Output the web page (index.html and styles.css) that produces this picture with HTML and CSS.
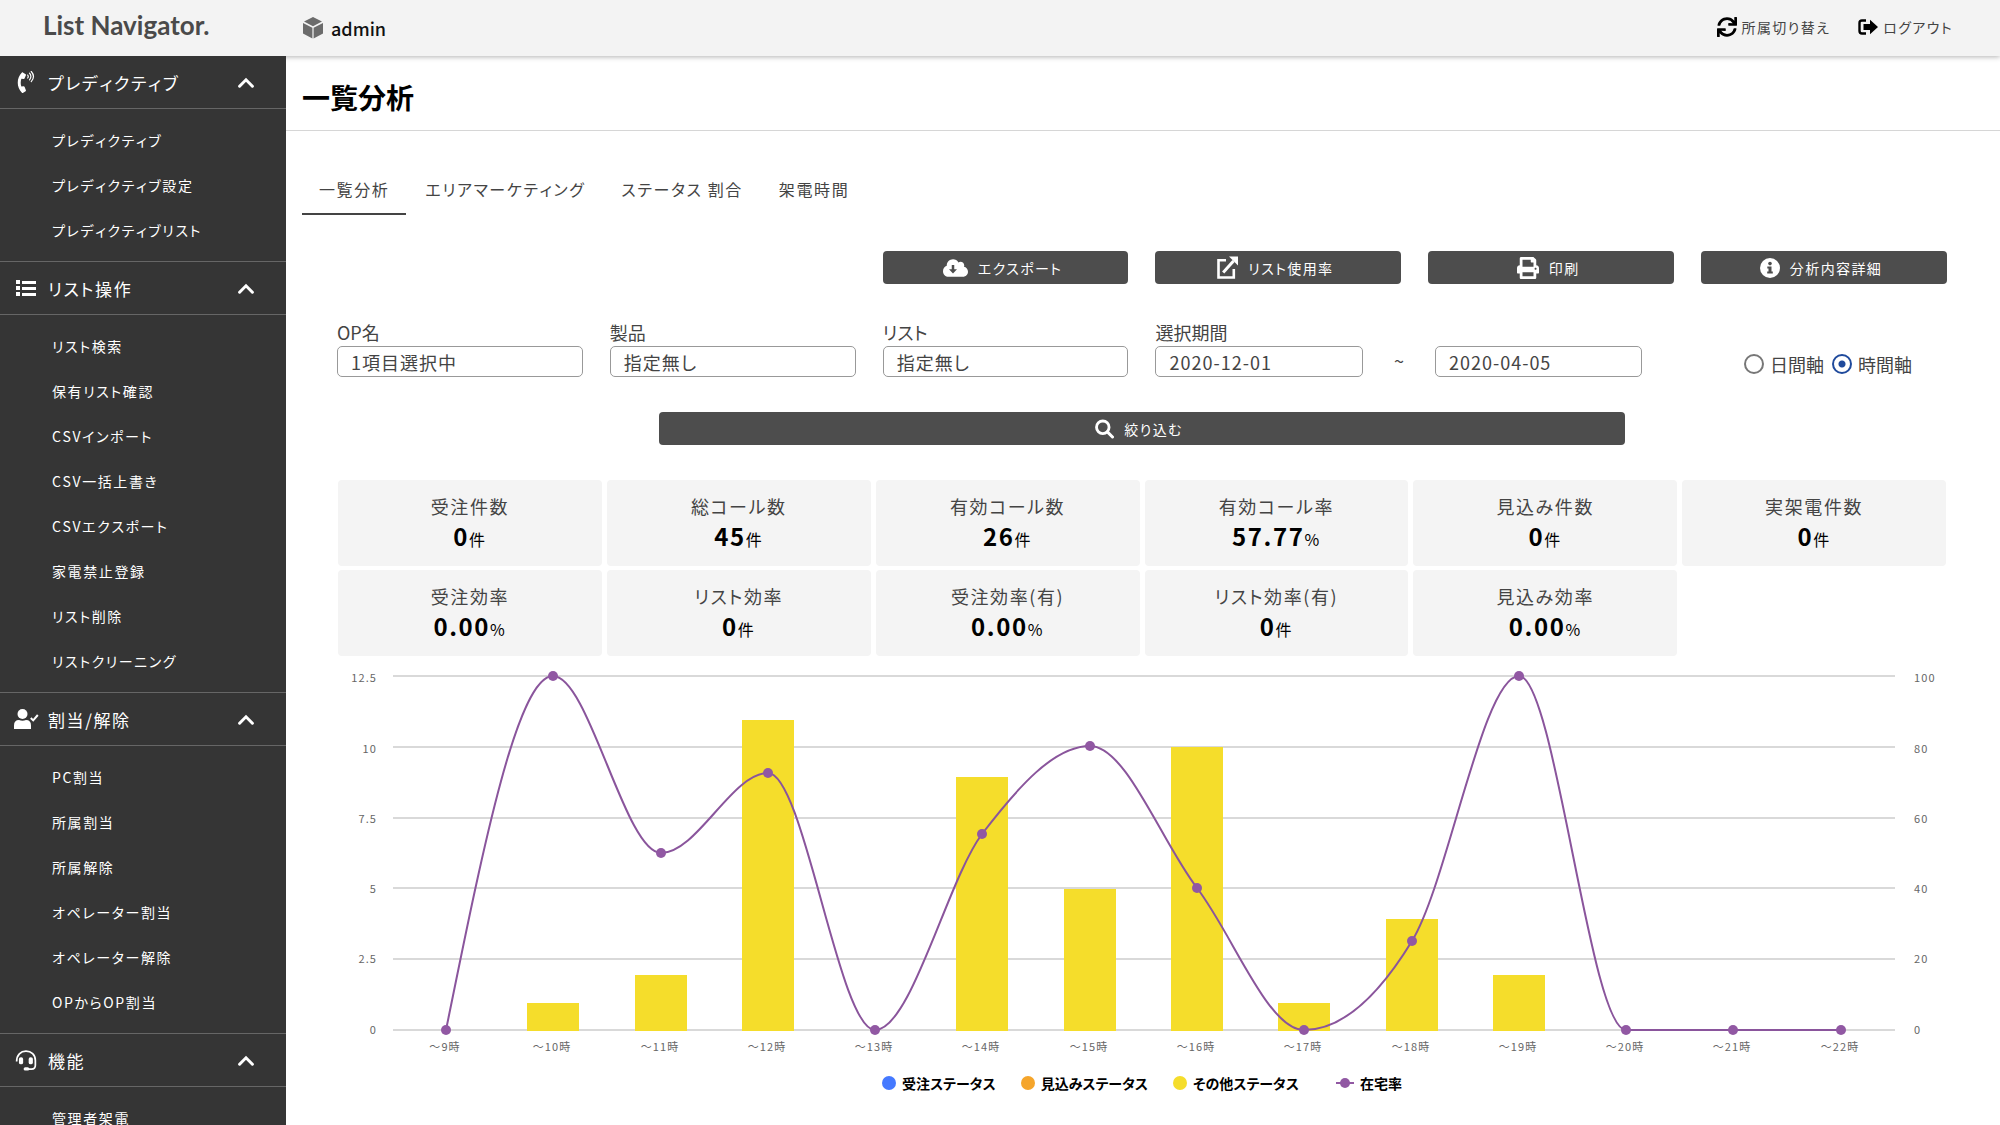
FILE: index.html
```html
<!DOCTYPE html>
<html lang="ja">
<head>
<meta charset="utf-8">
<meta name="viewport" content="width=device-width, initial-scale=1">
<title>一覧分析 | List Navigator.</title>
<link rel="stylesheet" href="styles.css">
</head>
<body>
<svg class="sprite" aria-hidden="true">
  <symbol id="i-chevron" viewBox="0 0 16 11"><path d="M1.6 9.2 8 2.8l6.4 6.4" fill="none" stroke="currentColor" stroke-width="3" stroke-linecap="round"/></symbol>
  <symbol id="i-phone" viewBox="0 0 384 512"><path fill="currentColor" d="M97.3 507c-129.9-129.9-129.7-340.300 0-470 5.700-5.700 14.500-6.600 21.300-2.400l64.800 40.500a17.200 17.200 0 0 1 6.800 21l-32.400 81a17.200 17.200 0 0 1-17.700 10.700l-55.800-5.600c-21 58.300-20.600 122.500 0 179.600l55.800-5.600a17.200 17.200 0 0 1 17.700 10.700l32.400 81a17.200 17.200 0 0 1-6.800 21l-64.800 40.500a17.200 17.200 0 0 1-21.300-2.400z"/><path fill="none" stroke="currentColor" stroke-width="28" stroke-linecap="round" d="M232 95q26 34 0 68M274 52q64 77 0 154M314 12q104 117 0 234"/></symbol>
  <symbol id="i-list" viewBox="0 0 20 16"><path fill="currentColor" d="M0 0h4v4H0zM0 6h4v4H0zM0 12h4v4H0zM6 1h14v3H6zM6 7h14v3H6zM6 13h14v3H6z"/></symbol>
  <symbol id="i-user" viewBox="0 0 24 20"><circle cx="8.500" cy="5" r="5" fill="currentColor"/><path fill="currentColor" d="M0 20v-3.500Q0 11 5 11q3.500 1.600 7 0 5 0 5 5.500V20z"/><path d="m16.800 9 2.400 2.400L23.800 6" fill="none" stroke="currentColor" stroke-width="2"/></symbol>
  <symbol id="i-headset" viewBox="0 0 22 22"><path d="M1.200 12C1.200 5 5.500 1.200 11 1.200S20.800 5 20.800 11v5q0 4-4 4H13" fill="none" stroke="currentColor" stroke-width="1.800"/><rect x="3.600" y="7.500" width="4.400" height="7.500" rx="2" fill="currentColor"/><rect x="13.800" y="7.500" width="4.400" height="7.500" rx="2" fill="currentColor"/><rect x="8.500" y="18" width="6" height="3.600" rx="1.800" fill="currentColor"/></symbol>
  <symbol id="i-cube" viewBox="0 0 20 22"><path fill="#6b6b6b" d="M10 0 19 4.500 10 9.200 1 4.500zM0 6l9.400 4.800V21.600L0 16.600zM20 6l-9.400 4.800V21.600L20 16.600z"/></symbol>
  <symbol id="i-sync" viewBox="0 0 512 512"><path fill="currentColor" d="M440.650 12.570l4 82.770A247.160 247.160 0 0 0 255.830 8C134.730 8 33.910 94.920 12.290 209.820A12 12 0 0 0 24.090 224h49.050a12 12 0 0 0 11.670-9.260 175.910 175.910 0 0 1 317-56.940l-101.460-4.860a12 12 0 0 0-12.570 12v47.410a12 12 0 0 0 12 12H500a12 12 0 0 0 12-12V12a12 12 0 0 0-12-12h-47.370a12 12 0 0 0-11.980 12.570zM255.830 432a175.610 175.610 0 0 1-146-77.800l101.800 4.870a12 12 0 0 0 12.570-12v-47.400a12 12 0 0 0-12-12H12a12 12 0 0 0-12 12V500a12 12 0 0 0 12 12h47.350a12 12 0 0 0 12-12.600l-4.150-82.570A247.170 247.170 0 0 0 255.830 504c121.110 0 221.930-86.920 243.550-201.820a12 12 0 0 0-11.800-14.180h-49.050a12 12 0 0 0-11.670 9.260A175.860 175.860 0 0 1 255.830 432z"/></symbol>
  <symbol id="i-logout" viewBox="0 0 20 16"><path d="M8 1.500H4Q1.500 1.500 1.500 4v8q0 2.500 2.500 2.500h4" fill="none" stroke="currentColor" stroke-width="2.400"/><path fill="currentColor" d="M12 .8 20 8l-8 7.200V11H5.500V5H12z"/></symbol>
  <symbol id="i-cloud" viewBox="0 32 640 448"><path fill="currentColor" d="M537.600 226.600c4.100-10.700 6.400-22.400 6.400-34.600 0-53-43-96-96-96-19.700 0-38.100 6-53.300 16.200C367 64.200 315.300 32 256 32c-88.400 0-160 71.600-160 160 0 2.700.1 5.400.2 8.100C40.200 219.800 0 273.200 0 336c0 79.500 64.500 144 144 144h368c70.700 0 128-57.300 128-128 0-61.900-44-113.600-102.400-125.400z"/><path fill="#4d4d4d" d="M224 180h64v110h70L256 396 154 290h70z"/></symbol>
  <symbol id="i-external" viewBox="0 0 21 23"><path d="M9 4.200H1.500v17.300h15.300V13" fill="none" stroke="currentColor" stroke-width="2.600"/><path d="M6.200 16.500 16.500 5" fill="none" stroke="currentColor" stroke-width="3"/><path fill="currentColor" d="M12 .5h9v9z"/></symbol>
  <symbol id="i-print" viewBox="0 0 512 512"><path fill="currentColor" d="M448 192V77.250c0-8.490-3.370-16.620-9.370-22.630L393.370 9.370c-6-6-14.140-9.370-22.630-9.370H96C78.330 0 64 14.330 64 32v160c-35.350 0-64 28.650-64 64v112c0 8.840 7.160 16 16 16h48v96c0 17.670 14.330 32 32 32h320c17.670 0 32-14.330 32-32v-96h48c8.840 0 16-7.160 16-16V256c0-35.350-28.650-64-64-64zm-64 256H128v-96h256v96zm0-224H128V64h192v48c0 8.840 7.160 16 16 16h48v96zm48 72c-13.250 0-24-10.750-24-24 0-13.260 10.750-24 24-24s24 10.740 24 24c0 13.250-10.750 24-24 24z"/></symbol>
  <symbol id="i-info" viewBox="0 0 20 20"><circle cx="10" cy="10" r="10" fill="currentColor"/><circle cx="10" cy="5.600" r="1.800" fill="#4d4d4d"/><path fill="#4d4d4d" d="M7.300 8.500h4.200v5h1.300v2H7.200v-2h1.300v-3H7.300z"/></symbol>
  <symbol id="i-search" viewBox="0 0 20 20"><circle cx="8.200" cy="8.200" r="6.600" fill="none" stroke="currentColor" stroke-width="3"/><path d="m13 13 5.400 5.400" stroke="currentColor" stroke-width="3.200" stroke-linecap="round"/></symbol>
</svg>

<header class="topbar">
  <a class="logo" href="#">List Navigator.</a>
  <div class="account"><svg width="20" height="22"><use href="#i-cube"/></svg><span>admin</span></div>
  <nav class="topnav">
    <a href="#"><svg width="20" height="20"><use href="#i-sync"/></svg>所属切り替え</a>
    <a href="#" class="logout"><svg width="20" height="16"><use href="#i-logout"/></svg>ログアウト</a>
  </nav>
</header>

<div class="shell">
  <aside class="sidebar">
    <button class="group" type="button"><svg class="gicon" width="20" height="22"><use href="#i-phone"/></svg><span>プレディクティブ</span><svg class="chev" width="16" height="11"><use href="#i-chevron"/></svg></button>
    <ul class="items">
      <li><a href="#">プレディクティブ</a></li>
      <li><a href="#">プレディクティブ設定</a></li>
      <li><a href="#">プレディクティブリスト</a></li>
    </ul>
    <button class="group" type="button"><svg class="gicon" width="21" height="16"><use href="#i-list"/></svg><span>リスト操作</span><svg class="chev" width="16" height="11"><use href="#i-chevron"/></svg></button>
    <ul class="items">
      <li><a href="#">リスト検索</a></li>
      <li><a href="#">保有リスト確認</a></li>
      <li><a href="#">CSVインポート</a></li>
      <li><a href="#">CSV一括上書き</a></li>
      <li><a href="#">CSVエクスポート</a></li>
      <li><a href="#">家電禁止登録</a></li>
      <li><a href="#">リスト削除</a></li>
      <li><a href="#">リストクリーニング</a></li>
    </ul>
    <button class="group" type="button"><svg class="gicon" width="24" height="20"><use href="#i-user"/></svg><span>割当/解除</span><svg class="chev" width="16" height="11"><use href="#i-chevron"/></svg></button>
    <ul class="items">
      <li><a href="#">PC割当</a></li>
      <li><a href="#">所属割当</a></li>
      <li><a href="#">所属解除</a></li>
      <li><a href="#">オペレーター割当</a></li>
      <li><a href="#">オペレーター解除</a></li>
      <li><a href="#">OPからOP割当</a></li>
    </ul>
    <button class="group" type="button"><svg class="gicon" width="22" height="21"><use href="#i-headset"/></svg><span>機能</span><svg class="chev" width="16" height="11"><use href="#i-chevron"/></svg></button>
    <ul class="items">
      <li><a href="#">管理者架電</a></li>
    </ul>
  </aside>

  <main class="main">
    <h1>一覧分析</h1>
    <nav class="tabs">
      <a href="#" class="active" aria-current="page">一覧分析</a>
      <a href="#">エリアマーケティング</a>
      <a href="#">ステータス 割合</a>
      <a href="#">架電時間</a>
    </nav>

    <div class="content">
      <div class="actions">
        <button class="btn" type="button"><svg width="25" height="18"><use href="#i-cloud"/></svg>エクスポート</button>
        <button class="btn" type="button"><svg width="21" height="23"><use href="#i-external"/></svg>リスト使用率</button>
        <button class="btn" type="button"><svg width="22" height="22"><use href="#i-print"/></svg>印刷</button>
        <button class="btn" type="button"><svg width="20" height="20"><use href="#i-info"/></svg>分析内容詳細</button>
      </div>

      <form class="filters">
        <div class="field"><label for="op">OP名</label><select id="op"><option>1項目選択中</option></select></div>
        <div class="field"><label for="product">製品</label><select id="product"><option>指定無し</option></select></div>
        <div class="field"><label for="list">リスト</label><select id="list"><option>指定無し</option></select></div>
        <div class="field period">
          <label for="from">選択期間</label>
          <div class="range"><input id="from" type="text" value="2020-12-01"><span>~</span><input type="text" value="2020-04-05" aria-label="終了日"></div>
        </div>
        <div class="axis">
          <label><input type="radio" name="axis">日間軸</label>
          <label><input type="radio" name="axis" checked>時間軸</label>
        </div>
        <button class="btn submit" type="button"><svg width="19" height="20"><use href="#i-search"/></svg>絞り込む</button>
      </form>

      <dl class="stats">
        <div><dt>受注件数</dt><dd><b>0</b>件</dd></div>
        <div><dt>総コール数</dt><dd><b>45</b>件</dd></div>
        <div><dt>有効コール数</dt><dd><b>26</b>件</dd></div>
        <div><dt>有効コール率</dt><dd><b>57.77</b>%</dd></div>
        <div><dt>見込み件数</dt><dd><b>0</b>件</dd></div>
        <div><dt>実架電件数</dt><dd><b>0</b>件</dd></div>
        <div><dt>受注効率</dt><dd><b>0.00</b>%</dd></div>
        <div><dt>リスト効率</dt><dd><b>0</b>件</dd></div>
        <div><dt>受注効率(有)</dt><dd><b>0.00</b>%</dd></div>
        <div><dt>リスト効率(有)</dt><dd><b>0</b>件</dd></div>
        <div><dt>見込み効率</dt><dd><b>0.00</b>%</dd></div>
      </dl>

      <svg class="chart" viewBox="-1 -4 1610 402" role="img" aria-label="時間別ステータスと在宅率">
        <path class="grid" d="M55 16H1557M55 87H1557M55 158H1557M55 228H1557M55 299H1557M55 370H1557"/>
        <g class="bars">
          <rect x="189" y="343" width="52" height="28"/>
          <rect x="297" y="315" width="52" height="56"/>
          <rect x="404" y="60" width="52" height="311"/>
          <rect x="618" y="117" width="52" height="254"/>
          <rect x="726" y="229" width="52" height="142"/>
          <rect x="833" y="87" width="52" height="284"/>
          <rect x="940" y="343" width="52" height="28"/>
          <rect x="1048" y="259" width="52" height="112"/>
          <rect x="1155" y="315" width="52" height="56"/>
        </g>
        <path class="line" d="M108 370C144 193 179 16 215 16C251 16 287 193 323 193C359 193 394 113 430 113C466 113 501 370 537 370C573 370 609 221 644 174C680 127 716 86 752 86C788 86 823 181 859 228C895 275 930 370 966 370C1002 370 1038 340 1074 281C1110 222 1145 16 1181 16C1217 16 1252 370 1288 370H1503"/>
        <g class="dots">
          <circle cx="108" cy="370" r="5"/><circle cx="215" cy="16" r="5"/><circle cx="323" cy="193" r="5"/><circle cx="430" cy="113" r="5"/><circle cx="537" cy="370" r="5"/><circle cx="644" cy="174" r="5"/><circle cx="752" cy="86" r="5"/><circle cx="859" cy="228" r="5"/><circle cx="966" cy="370" r="5"/><circle cx="1074" cy="281" r="5"/><circle cx="1181" cy="16" r="5"/><circle cx="1288" cy="370" r="5"/><circle cx="1395" cy="370" r="5"/><circle cx="1503" cy="370" r="5"/>
        </g>
        <g class="tick end">
          <text x="39" y="22">12.5</text><text x="39" y="93">10</text><text x="39" y="163">7.5</text><text x="39" y="233">5</text><text x="39" y="303">2.5</text><text x="39" y="374">0</text>
        </g>
        <g class="tick">
          <text x="1576" y="22">100</text><text x="1576" y="93">80</text><text x="1576" y="163">60</text><text x="1576" y="233">40</text><text x="1576" y="303">20</text><text x="1576" y="374">0</text>
        </g>
        <g class="tick mid">
          <text x="107" y="391">～9時</text><text x="214" y="391">～10時</text><text x="322" y="391">～11時</text><text x="429" y="391">～12時</text><text x="536" y="391">～13時</text><text x="643" y="391">～14時</text><text x="751" y="391">～15時</text><text x="858" y="391">～16時</text><text x="965" y="391">～17時</text><text x="1073" y="391">～18時</text><text x="1180" y="391">～19時</text><text x="1287" y="391">～20時</text><text x="1394" y="391">～21時</text><text x="1502" y="391">～22時</text>
        </g>
      </svg>
      <ul class="legend">
        <li><i class="dot blue"></i>受注ステータス</li>
        <li><i class="dot orange"></i>見込みステータス</li>
        <li><i class="dot yellow"></i>その他ステータス</li>
        <li class="rate"><svg width="18" height="10" viewBox="0 0 18 10"><path d="M0 5h18" stroke="#9158a3" stroke-width="2"/><circle cx="9" cy="5" r="5" fill="#9158a3"/></svg>在宅率</li>
      </ul>
    </div>
  </main>
</div>
</body>
</html>
```
FILE: styles.css
```css
* { box-sizing: border-box; }

body {
  margin: 0;
  font-family: "Noto Sans CJK JP", sans-serif;
  font-feature-settings: "palt";
  color: #444;
  background: #fff;
}

a { color: inherit; text-decoration: none; }
ul, dl, dd { margin: 0; padding: 0; list-style: none; }
svg { flex: none; }
button, input, select { font: inherit; font-feature-settings: inherit; color: inherit; }
.sprite { display: none; }

/* top bar */
.topbar {
  position: relative;
  z-index: 1;
  display: flex;
  align-items: center;
  height: 56px;
  padding-right: 47px;
  background: #f3f3f3;
  box-shadow: 0 1px 5px rgba(0, 0, 0, .3);
}
.logo {
  width: 303px;
  padding: 0 0 6px 43px;
  font: 700 26px/30px Lato, sans-serif;
  color: #4a4a4a;
}
.account {
  display: flex;
  align-items: center;
  gap: 8px;
  padding-bottom: 1px;
  font-size: 18px;
  line-height: 24px;
  font-weight: 500;
  color: #111;
}
.topnav {
  display: flex;
  gap: 28px;
  margin-left: auto;
  padding-bottom: 2px;
  font-size: 14px;
  line-height: 20px;
  letter-spacing: .1em;
}
.topnav a { display: flex; align-items: center; gap: 5px; }
.topnav svg { color: #000; }

.shell { display: flex; align-items: flex-start; }

/* sidebar */
.sidebar {
  position: sticky;
  top: 0;
  z-index: 2;
  flex: none;
  width: 286px;
  height: calc(100vh - 56px);
  overflow-y: auto;
  scrollbar-width: none;
  background: #353535;
  color: #fff;
  letter-spacing: .1em;
  font-kerning: none;
}
.group {
  display: flex;
  align-items: center;
  width: 100%;
  height: 54px;
  padding: 0 32px 0 11px;
  border: solid #666;
  border-width: 1px 0;
  background: none;
  font-size: 17px;
  letter-spacing: inherit;
  font-kerning: inherit;
}
.group:first-child { height: 53px; border-top: 0; }
.gicon { width: 30px; margin-right: 7px; }
.chev { margin-left: auto; }
.items { padding: 9px 0 8px; font-size: 14px; }
.items a { display: block; padding-left: 52px; line-height: 45px; }

/* page */
.main { flex: 1; min-width: 0; }
h1 {
  margin: 0;
  padding: 21px 16px 13px;
  border-bottom: 1px solid #d6d6d6;
  font-size: 28px;
  line-height: 40px;
  font-weight: 700;
  color: #000;
}
.tabs {
  display: flex;
  gap: 2px;
  padding: 34px 16px 0;
  font-size: 16px;
  line-height: 48px;
  letter-spacing: .1em;
  font-kerning: none;
}
.tabs a { padding: 0 17px; border-bottom: 2px solid transparent; }
.tabs .active { border-color: #444; }

.content { padding: 36px 53px 32px 51px; }

.actions, .filters {
  display: grid;
  grid-template-columns: repeat(6, 1fr);
  column-gap: 27px;
}
.actions .btn:first-child { grid-column: 3; }
.btn {
  display: flex;
  align-items: center;
  justify-content: center;
  gap: 10px;
  height: 33px;
  padding: 0 6px 0 0;
  border: 0;
  border-radius: 4px;
  background: #4d4d4d;
  color: #fff;
  font-size: 14px;
  letter-spacing: .1em;
}

.filters {
  align-items: end;
  row-gap: 35px;
  margin-top: 36px;
  font-size: 18px;
}
.field > label { display: block; margin-bottom: 2px; line-height: 24px; }
.period { grid-column: span 2; }
.field select, .field input {
  display: block;
  width: 100%;
  height: 31px;
  padding: 0 12px 0 13px;
  border: 1px solid #999;
  border-radius: 5px;
  background: #fff;
  appearance: none;
  letter-spacing: 1px;
}
.range { display: flex; }
.range .field input, .range input { flex: none; width: 40%; }
.range span { flex: none; width: 72px; text-align: center; line-height: 28px; }
.axis {
  display: flex;
  justify-content: flex-end;
  gap: 8px;
  height: 27px;
  padding-right: 35px;
}
.axis label { display: flex; align-items: center; gap: 6px; white-space: nowrap; }
.axis input {
  flex: none;
  width: 20px;
  height: 20px;
  margin: 0;
  border: 2px solid #777;
  border-radius: 50%;
  appearance: none;
}
.axis input:checked {
  border-color: #1f4a9c;
  background: radial-gradient(circle, #1f4a9c 3px, transparent 4px);
}
.submit { grid-column: 1 / -1; justify-self: center; width: 60%; }

/* figures */
.stats {
  display: grid;
  grid-template-columns: repeat(6, 1fr);
  gap: 4px 5px;
  margin-top: 35px;
  padding: 0 1px;
  text-align: center;
  letter-spacing: .1em;
}
.stats div { height: 86px; padding-top: 12px; border-radius: 4px; background: #f4f4f4; }
.stats dt { font-size: 18px; line-height: 28px; }
.stats dd { font-size: 16px; line-height: 32px; color: #000; }
.stats b { font-size: 24px; font-weight: 700; }

/* chart */
.chart { display: block; width: 100%; height: auto; }
.grid { stroke: #d9d9d9; stroke-width: 2; fill: none; }
.bars { fill: #f5dd2b; }
.line { fill: none; stroke: #8a559c; stroke-width: 2; }
.dots { fill: #9158a3; }
.tick { font-size: 11px; letter-spacing: .1em; fill: #666; }
.end { text-anchor: end; }
.mid { text-anchor: middle; }

.legend {
  display: flex;
  justify-content: center;
  gap: 25px;
  margin-top: 15px;
  font-size: 14px;
  line-height: 20px;
  font-weight: 700;
  color: #000;
}
.legend li { display: flex; align-items: center; gap: 6px; }
.legend .rate { margin-left: 12px; }
.dot { width: 14px; height: 14px; border-radius: 50%; }
.blue { background: #4579ff; }
.orange { background: #f5a52b; }
.yellow { background: #f5dd2b; }
```
